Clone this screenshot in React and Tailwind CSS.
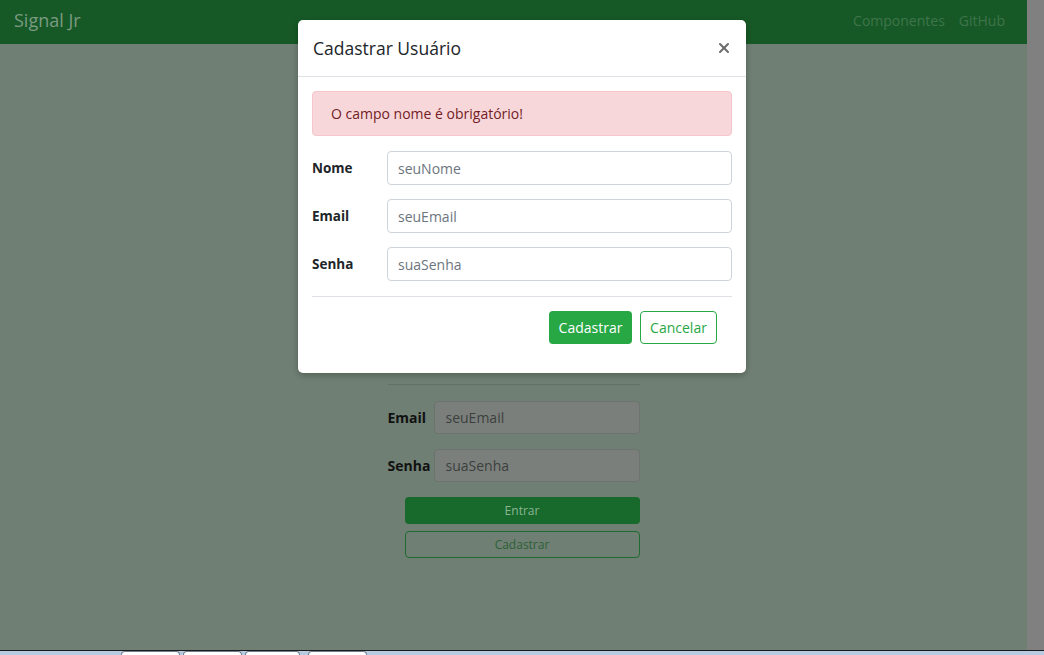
import { X } from 'lucide-react'

const font = { fontFamily: '"Open Sans", "Liberation Sans", sans-serif' }

function Field({ label, placeholder }) {
  return (
    <div className="flex items-center">
      <label className="w-[75px] shrink-0 text-[13.5px] font-bold text-[#212529]">{label}</label>
      <input
        className="h-[34px] flex-1 rounded border border-[#ced4da] bg-white px-[10px] text-[14px] text-[#495057] placeholder:text-[#6c757d] outline-none"
        placeholder={placeholder}
      />
    </div>
  )
}

function BackField({ label, placeholder }) {
  return (
    <div className="flex items-center">
      <span className="w-[46px] shrink-0 text-[14px] font-bold text-[#111]">{label}</span>
      <div className="flex h-[33px] flex-1 items-center rounded border border-[#6d736f] bg-[#7b7f7c] px-[11px] text-[14px] text-[#3c3f3d]">
        {placeholder}
      </div>
    </div>
  )
}

export default function App() {
  return (
    <div className="relative flex h-[655px] w-[1044px] flex-col overflow-hidden bg-[#6f7f73]" style={font}>
      <div className="flex h-[650px]">
        <div className="flex flex-1 flex-col">
          <nav className="flex h-11 items-center justify-between bg-[#165926] pb-1 pl-[14px] pr-[22px]">
            <span className="text-[18px] text-[#7b9a81]">Signal Jr</span>
            <div className="flex gap-[14px] text-[14px] text-[#3f744a]">
              <span>Componentes</span>
              <span>GitHub</span>
            </div>
          </nav>
          <div className="mx-auto w-[252px] pt-[340px]">
            <div className="h-px bg-[#637069]" />
            <div className="mt-4 flex flex-col gap-[15px]">
              <BackField label="Email" placeholder="seuEmail" />
              <BackField label="Senha" placeholder="suaSenha" />
            </div>
            <div className="ml-[17px] mt-[15px] flex flex-col gap-[7px]">
              <div className="flex h-[27px] items-center justify-center rounded bg-[#176a2b] text-[12px] text-[#8cb595]">Entrar</div>
              <div className="flex h-[27px] items-center justify-center rounded border border-[#1f6a2f] text-[12px] text-[#2d5f37]">Cadastrar</div>
            </div>
          </div>
        </div>
        <div className="w-[17px] bg-[#808080]" />
      </div>
      <div className="flex h-[5px] items-start border-t border-[#1a1a1a] bg-[#b9cbe0]">
        <div className="w-[121px]" />
        <div className="flex gap-[3px]">
          <div className="h-[4px] w-[59px] rounded-t border border-b-0 border-[#6f7f8f] bg-white" />
          <div className="h-[4px] w-[59px] rounded-t border border-b-0 border-[#6f7f8f] bg-white" />
          <div className="h-[4px] w-[55px] rounded-t border border-b-0 border-[#6f7f8f] bg-white" />
          <div className="ml-[5px] h-[4px] w-[59px] rounded-t border border-b-0 border-[#6f7f8f] bg-white" />
        </div>
      </div>

      <div className="absolute left-[298px] top-[20px] w-[448px] rounded-[5px] bg-white shadow-[0_2px_6px_rgba(0,0,0,0.25)]">
        <div className="flex h-[57px] items-center justify-between border-b border-[#dee2e6] pl-[15px] pr-[14px]">
          <h5 className="text-[17.5px] font-medium text-[#212529]">Cadastrar Usuário</h5>
          <X className="h-[16px] w-[16px] text-[#6b6b6b]" strokeWidth={3} />
        </div>
        <div className="px-[14px] pt-[14px]">
          <div className="flex h-[45px] items-center rounded border border-[#f5c6cb] bg-[#f8d7da] px-[18px] text-[14px] text-[#721c24]">
            O campo nome é obrigatório!
          </div>
          <div className="mt-[15px] flex flex-col gap-[14px]">
            <Field label="Nome" placeholder="seuNome" />
            <Field label="Email" placeholder="seuEmail" />
            <Field label="Senha" placeholder="suaSenha" />
          </div>
          <div className="mt-[15px] h-px bg-[#dee2e6]" />
          <div className="flex justify-end gap-2 pb-[29px] pr-[15px] pt-[14px]">
            <button className="h-[33px] w-[83px] rounded bg-[#28a745] text-[14px] text-white">Cadastrar</button>
            <button className="h-[33px] w-[77px] rounded border border-[#28a745] bg-white text-[14px] text-[#28a745]">Cancelar</button>
          </div>
        </div>
      </div>
    </div>
  )
}
